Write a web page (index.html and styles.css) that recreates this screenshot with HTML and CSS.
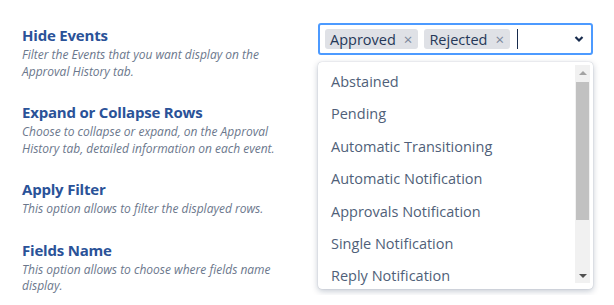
FILE: index.html
```html
<!DOCTYPE html>
<html lang="en">
<head>
    <meta charset="UTF-8">
    <meta name="viewport" content="width=device-width, initial-scale=1.0">
    <title>Approval History Settings</title>
    <link rel="stylesheet" href="styles.css">
</head>
<body>
    <div class="settings">
        <div class="options">
            <div class="option">
                <h3 class="option-title">Hide Events</h3>
                <p class="option-desc">Filter the Events that you want display on the Approval History tab.</p>
            </div>
            <div class="option">
                <h3 class="option-title">Expand or Collapse Rows</h3>
                <p class="option-desc">Choose to collapse or expand, on the Approval History tab, detailed information on each event.</p>
            </div>
            <div class="option">
                <h3 class="option-title">Apply Filter</h3>
                <p class="option-desc">This option allows to filter the displayed rows.</p>
            </div>
            <div class="option">
                <h3 class="option-title">Fields Name</h3>
                <p class="option-desc">This option allows to choose where fields name display.</p>
            </div>
        </div>

        <div class="picker">
            <div class="select">
                <span class="chip">Approved <span class="chip-x">&times;</span></span>
                <span class="chip">Rejected <span class="chip-x">&times;</span></span>
                <span class="caret"></span>
                <svg class="chevron" width="10" height="8" viewBox="0 0 10 8">
                    <path d="M1.5 2 L5 5.5 L8.5 2" fill="none" stroke="#172b4d" stroke-width="2.2"/>
                </svg>
            </div>

            <div class="menu">
                <ul class="menu-list">
                    <li>Abstained</li>
                    <li>Pending</li>
                    <li>Automatic Transitioning</li>
                    <li>Automatic Notification</li>
                    <li>Approvals Notification</li>
                    <li>Single Notification</li>
                    <li>Reply Notification</li>
                </ul>
                <div class="scrollbar">
                    <span class="arrow-up"></span>
                    <span class="thumb"></span>
                    <span class="arrow-down"></span>
                </div>
            </div>
        </div>
    </div>
</body>
</html>
```

FILE: styles.css
```css
body {
    font-family: "Open Sans", "Noto Sans", sans-serif;
    background: #ffffff;
    margin: 0;
    color: #172b4d;
}

.settings {
    display: flex;
    padding: 23px 0 0 22px;
}

.options {
    width: 296px;
    flex-shrink: 0;
    padding-top: 2px;
}

.option {
    margin-bottom: 22px;
}

.option:last-child {
    margin-bottom: 0;
}

.option-title {
    margin: 0 0 2px;
    font-size: 15px;
    line-height: 20px;
    font-weight: 700;
    color: #2a5298;
    letter-spacing: -0.2px;
}

.option-desc {
    margin: 0;
    font-size: 12px;
    line-height: 16.5px;
    font-style: italic;
    color: #6b778c;
    width: 262px;
}

.picker {
    position: relative;
    width: 275px;
}

.select {
    display: flex;
    align-items: center;
    gap: 6px;
    height: 28px;
    padding: 0 5px;
    border: 2px solid #4c9aff;
    border-radius: 3px;
}

.chip {
    display: flex;
    align-items: center;
    gap: 8px;
    height: 20px;
    padding: 0 6px 0 5px;
    background: #dfe1e6;
    border-radius: 3px;
    font-size: 14.5px;
    color: #253858;
}

.chip-x {
    font-size: 15px;
    color: #7a869a;
}

.caret {
    width: 1px;
    height: 20px;
    background: #172b4d;
    margin-left: 1px;
}

.chevron {
    margin-left: auto;
    margin-right: 2px;
}

.menu {
    position: absolute;
    top: 39px;
    left: 0;
    right: 0;
    height: 227px;
    display: flex;
    background: #ffffff;
    border-radius: 4px;
    box-shadow: 0 2px 6px rgba(9, 30, 66, 0.25), 0 0 1px rgba(9, 30, 66, 0.31);
    overflow: hidden;
}

.menu-list {
    flex: 1;
    list-style: none;
    margin: 0;
    padding: 3px 0 0 13px;
}

.menu-list li {
    height: 32.4px;
    line-height: 33.5px;
    font-size: 14.5px;
    color: #505f79;
}

.scrollbar {
    width: 15px;
    margin: 3px 3px 6px 0;
    background: #f1f1f1;
    display: flex;
    flex-direction: column;
    align-items: center;
}

.arrow-up {
    margin-top: 6px;
    border: 4px solid transparent;
    border-top: 0;
    border-bottom: 4px solid #a3a3a3;
}

.thumb {
    width: 13px;
    height: 138px;
    margin-top: 7px;
    background: #c1c1c1;
}

.arrow-down {
    margin-top: auto;
    margin-bottom: 5px;
    border: 4px solid transparent;
    border-bottom: 0;
    border-top: 4px solid #505050;
}
```
